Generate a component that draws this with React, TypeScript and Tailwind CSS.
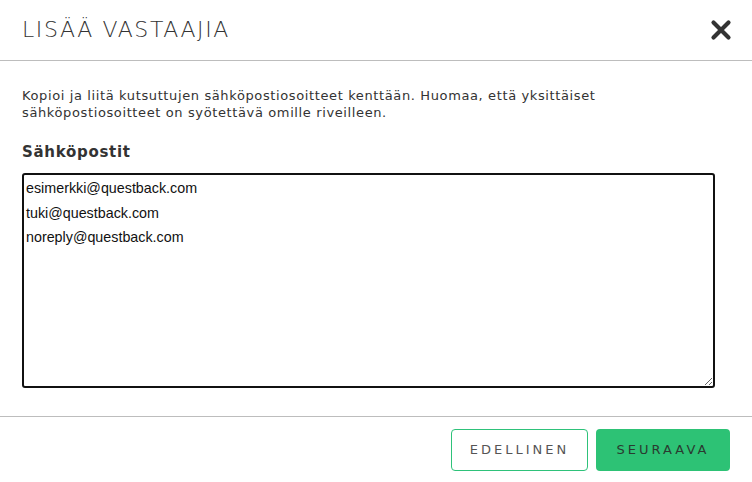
import React from "react";

export default function App() {
  return (
    <div className="w-[752px] h-[482px] bg-white flex flex-col" style={{ fontFamily: '"DejaVu Sans", "Open Sans", sans-serif' }}>
      <div className="h-[61px] flex items-center justify-between pl-[22px] pr-[20px] border-b border-[#bdbdbd] shrink-0">
        <h1 className="text-[22px] font-extralight text-[#333] tracking-[1.6px] leading-none">LISÄÄ VASTAAJIA</h1>
        <svg width="22" height="22" viewBox="0 0 22 22">
          <path d="M3.5 3.5 L18.5 18.5 M18.5 3.5 L3.5 18.5" stroke="#333" strokeWidth="4.2" strokeLinecap="round" />
        </svg>
      </div>
      <div className="flex-1 px-[22px] pt-[26px] flex flex-col">
        <p className="text-[13px] leading-[17px] text-[#333] tracking-[0.62px]">
          Kopioi ja liitä kutsuttujen sähköpostiosoitteet kenttään. Huomaa, että yksittäiset
          <br />
          sähköpostiosoitteet on syötettävä omille riveilleen.
        </p>
        <label className="mt-[21px] text-[15px] font-bold text-[#333] leading-[20px] tracking-[0.7px]">Sähköpostit</label>
        <textarea
          className="mt-[11px] w-[693px] h-[215px] border-2 border-[#111] rounded-[3px] px-[2px] pt-[1px] text-[14.3px] leading-[24.5px] text-[#111] resize-y outline-none"
          style={{ fontFamily: '"Liberation Sans", Arial, sans-serif' }}
          defaultValue={"esimerkki@questback.com\ntuki@questback.com\nnoreply@questback.com"}
        />
      </div>
      <div className="h-[66px] border-t border-[#bdbdbd] flex items-center justify-end gap-[8px] pr-[22px] shrink-0">
        <button className="w-[137px] h-[42px] border border-[#2ec27a] rounded-[4px] bg-white text-[13px] tracking-[3px] text-[#555]">
          EDELLINEN
        </button>
        <button className="w-[134px] h-[42px] rounded-[4px] bg-[#2dc275] text-[13px] tracking-[3px] text-[#2a3a30]">
          SEURAAVA
        </button>
      </div>
    </div>
  );
}
